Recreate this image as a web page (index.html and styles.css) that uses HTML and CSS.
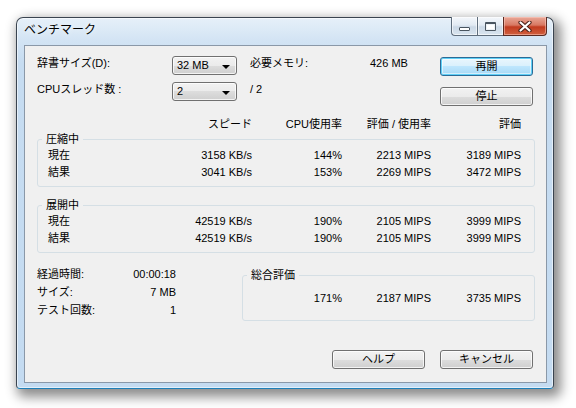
FILE: index.html
```html
<!DOCTYPE html>
<html lang="ja">
<head>
<meta charset="utf-8">
<title>ベンチマーク</title>
<link rel="stylesheet" href="styles.css">
</head>
<body>
<div class="window">
  <div class="titlebar">
    <span class="title">ベンチマーク</span>
    <div class="caption">
      <span class="cbtn min"><i class="min-icon"></i></span>
      <span class="cbtn max"><i class="max-icon"></i></span>
      <span class="cbtn close">
        <svg width="14" height="11" viewBox="0 0 14 11"><path d="M2.5 1.5 L11.5 9.5 M11.5 1.5 L2.5 9.5" stroke="#4a2018" stroke-width="4.2" stroke-linecap="round" fill="none"/><path d="M2.5 1.5 L11.5 9.5 M11.5 1.5 L2.5 9.5" stroke="#ffffff" stroke-width="2.2" stroke-linecap="round" fill="none"/></svg>
      </span>
    </div>
  </div>
  <div class="client">
    <div class="top">
      <div class="settings">
        <span class="lbl">辞書サイズ(D):</span>
        <div class="combo"><span>32 MB</span><b class="arrow"></b></div>
        <span></span>
        <span class="lbl">必要メモリ:</span>
        <span class="lbl memval">426 MB</span>
        <span class="lbl">CPUスレッド数 :</span>
        <div class="combo"><span>2</span><b class="arrow"></b></div>
        <span></span>
        <span class="lbl">/ 2</span>
        <span></span>
      </div>
      <div class="actions">
        <button class="btn default">再開</button>
        <button class="btn">停止</button>
      </div>
    </div>

    <div class="cols head">
      <span></span><span>スピード</span><span>CPU使用率</span><span>評価 / 使用率</span><span>評価</span>
    </div>

    <fieldset class="group">
      <legend>圧縮中</legend>
      <div class="rows">
        <div class="cols row"><span class="name">現在</span><span>3158 KB/s</span><span>144%</span><span>2213 MIPS</span><span>3189 MIPS</span></div>
        <div class="cols row"><span class="name">結果</span><span>3041 KB/s</span><span>153%</span><span>2269 MIPS</span><span>3472 MIPS</span></div>
      </div>
    </fieldset>

    <fieldset class="group second">
      <legend>展開中</legend>
      <div class="rows">
        <div class="cols row"><span class="name">現在</span><span>42519 KB/s</span><span>190%</span><span>2105 MIPS</span><span>3999 MIPS</span></div>
        <div class="cols row"><span class="name">結果</span><span>42519 KB/s</span><span>190%</span><span>2105 MIPS</span><span>3999 MIPS</span></div>
      </div>
    </fieldset>

    <div class="bottom">
      <div class="info">
        <span>経過時間:</span><span class="val">00:00:18</span>
        <span>サイズ:</span><span class="val">7 MB</span>
        <span>テスト回数:</span><span class="val">1</span>
      </div>
      <fieldset class="group total">
        <legend>総合評価</legend>
        <div class="total-rows">
          <div class="tcols row"><span></span><span>171%</span><span>2187 MIPS</span><span>3735 MIPS</span></div>
        </div>
      </fieldset>
    </div>

    <div class="footer">
      <button class="btn">ヘルプ</button>
      <button class="btn">キャンセル</button>
    </div>
  </div>
</div>
</body>
</html>
```

FILE: styles.css
```css
* { box-sizing: border-box; }

html, body {
  margin: 0;
  padding: 0;
  background: #ffffff;
}

body {
  width: 576px;
  height: 408px;
  overflow: hidden;
  font-family: "Liberation Sans", "Noto Sans CJK JP", sans-serif;
  font-size: 11px;
  line-height: 14px;
  color: #000;
}

.window {
  margin: 17px 0 0 16px;
  width: 538px;
  height: 372px;
  border: 1px solid #3a4450;
  border-bottom-color: #1d7fb8;
  border-radius: 7px 7px 4px 4px;
  background: linear-gradient(to bottom, #e6f0f9 0px, #d3e4f4 22px, #c6dcf1 45px, #c4dbf1 100%);
  box-shadow: inset 0 0 0 1px rgba(255,255,255,0.55), 4px 5px 12px 3px rgba(0,0,0,0.45);
  padding: 0 6px 5px 7px;
  display: flex;
  flex-direction: column;
}

.titlebar {
  height: 27px;
  display: flex;
  align-items: flex-start;
  flex: 0 0 27px;
}

.title {
  padding-top: 4px;
  font-size: 12px;
  line-height: 16px;
  color: #000;
  text-shadow: 0 0 6px rgba(255,255,255,0.9);
}

.caption {
  margin-left: auto;
  margin-top: -1px;
  display: flex;
}

.cbtn {
  height: 19px;
  display: flex;
  align-items: center;
  justify-content: center;
  border: 1px solid #5f6d7c;
  border-top: none;
}

.min, .max {
  width: 26px;
  border-right: none;
  background: linear-gradient(to bottom, #f4f7fb 0%, #e2eaf3 45%, #cbd8e6 55%, #d9e4ef 100%);
  box-shadow: inset 0 0 0 1px rgba(255,255,255,0.6);
}

.min { border-radius: 0 0 0 4px; }

.close {
  width: 44px;
  border-radius: 0 0 4px 0;
  border-color: #5a2a22;
  background: linear-gradient(to bottom, #e9a898 0%, #d87862 45%, #c23b20 55%, #d0603f 100%);
  box-shadow: inset 0 0 0 1px rgba(255,210,200,0.5);
}

.min-icon {
  display: block;
  width: 11px;
  height: 4px;
  margin-top: 6px;
  border: 1px solid #4a5560;
  background: #fff;
  border-radius: 1px;
}

.max-icon {
  display: block;
  width: 11px;
  height: 9px;
  border: 1px solid #4a5560;
  border-top-width: 2px;
  background: #fff;
  box-shadow: inset 0 0 0 1px #eef2f6;
  border-radius: 1px;
}

.client {
  flex: 1;
  border: 1px solid #8a98a8;
  background: #f0f0f0;
  padding: 10px 11px 13px 12px;
  display: flex;
  flex-direction: column;
}

.top {
  display: flex;
  height: 50px;
  flex: 0 0 50px;
}

.settings {
  display: grid;
  grid-template-columns: 135px 65px 13px 120px 36px;
  grid-template-rows: 19px 19px;
  row-gap: 7px;
}

.lbl { align-self: start; }
.memval { text-align: right; white-space: nowrap; }

.combo {
  height: 19px;
  border: 1px solid #707070;
  border-radius: 3px;
  background: linear-gradient(to bottom, #f2f2f2 0%, #ebebeb 50%, #dddddd 50%, #cfcfcf 100%);
  box-shadow: inset 0 0 0 1px rgba(255,255,255,0.75);
  display: flex;
  align-items: center;
  padding: 0 4px 0 4px;
  line-height: 17px;
}

.combo span { flex: 1; }

.arrow {
  width: 0;
  height: 0;
  border-left: 4px solid transparent;
  border-right: 4px solid transparent;
  border-top: 4px solid #000;
  margin-right: 2px;
  margin-top: 2px;
}

.actions {
  margin-left: auto;
  margin-right: 2px;
  padding-top: 1px;
  display: flex;
  flex-direction: column;
  gap: 11px;
}

.btn {
  width: 93px;
  height: 19px;
  padding: 0;
  font: inherit;
  line-height: 17px;
  color: #000;
  border: 1px solid #707070;
  border-radius: 3px;
  background: linear-gradient(to bottom, #f2f2f2 0%, #ebebeb 50%, #dddddd 50%, #cfcfcf 100%);
  box-shadow: inset 0 0 0 1px rgba(255,255,255,0.75);
}

.btn.default {
  border-color: #2c6b96;
  background: linear-gradient(to bottom, #eaf6fd 0%, #d9f0fc 50%, #bee6fd 50%, #a7d9f5 100%);
  box-shadow: inset 0 0 0 1px #5fd0f7, inset 0 0 0 2px rgba(255,255,255,0.5);
}

.cols {
  display: grid;
  grid-template-columns: 1fr 90px 90px 89px 90px;
  text-align: right;
  white-space: nowrap;
}

.head {
  margin-top: 11px;
  padding: 0 14px 0 11px;
  line-height: 14px;
}

.group {
  margin: 1px 0 0 0;
  padding: 0;
  min-width: 0;
  border: 1px solid #d5dfe5;
  border-radius: 3px;
}

.group legend {
  margin-left: 4px;
  padding: 0 4px;
  line-height: 14px;
}

.group.second { margin-top: 11px; }

.rows {
  padding: 1px 13px 5px 10px;
}

.row {
  height: 17px;
  line-height: 17px;
}

.name { text-align: left; }

.bottom {
  margin-top: 12px;
  display: flex;
  align-items: flex-start;
}

.info {
  width: 139px;
  display: grid;
  grid-template-columns: 1fr auto;
  grid-auto-rows: 18px;
  line-height: 18px;
}

.val { text-align: right; }

.group.total {
  margin: 3px 0 0 auto;
  flex: 0 0 293px;
}

.total-rows {
  padding: 8px 13px 13px 0;
}

.tcols {
  display: grid;
  grid-template-columns: 1fr 90px 89px 90px;
  text-align: right;
  white-space: nowrap;
}

.footer {
  margin-top: auto;
  margin-right: 2px;
  display: flex;
  justify-content: flex-end;
  gap: 15px;
}
```
